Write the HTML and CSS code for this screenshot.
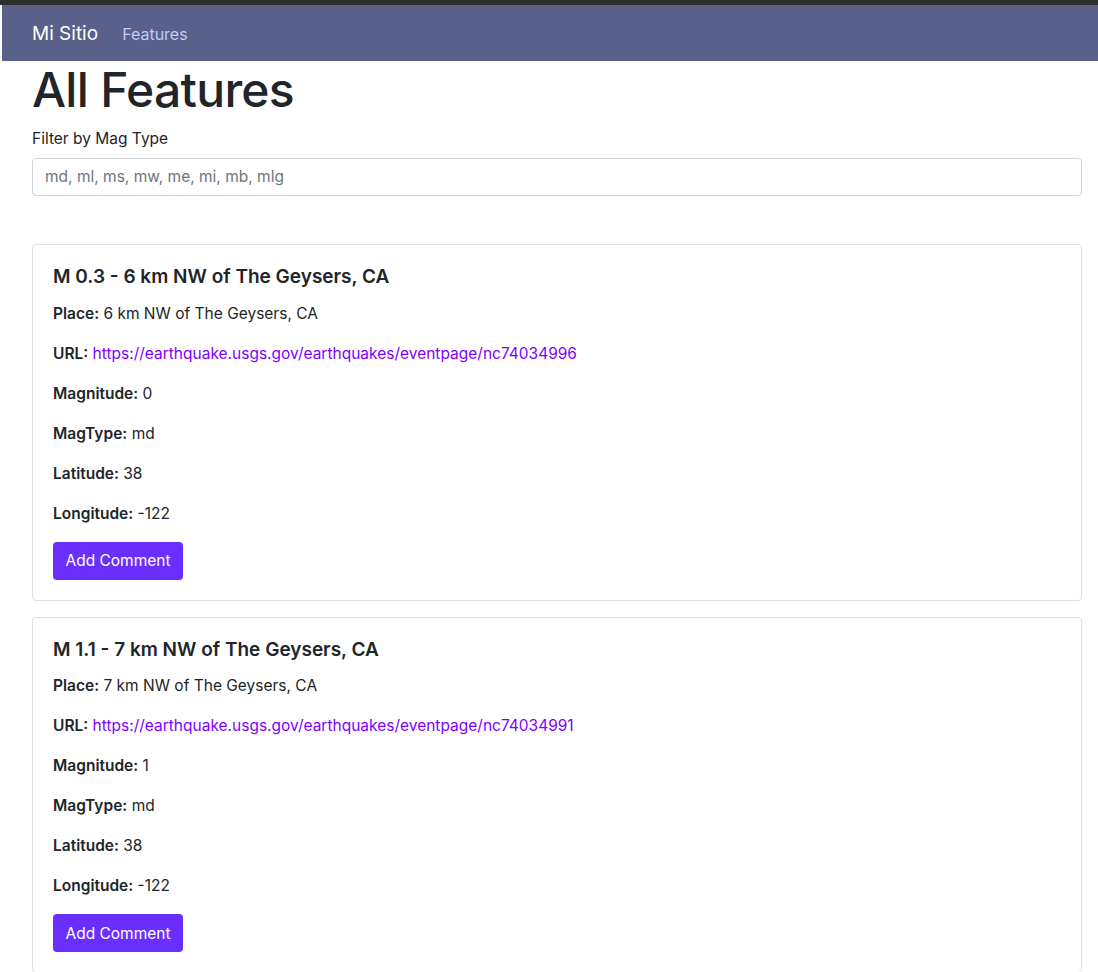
FILE: index.html
```html
<!DOCTYPE html>
<html lang="es">
<head>
<meta charset="utf-8">
<title>Mi Sitio</title>
<link rel="stylesheet" href="styles.css">
</head>
<body>
<div class="topstrip"></div>
<nav class="navbar">
  <a class="brand" href="#">Mi Sitio</a>
  <a class="nav-link" href="#">Features</a>
</nav>
<main class="container">
  <h1 class="title">All Features</h1>
  <label class="label" for="filter">Filter by Mag Type</label>
  <input id="filter" class="input" type="text" placeholder="md, ml, ms, mw, me, mi, mb, mlg">

  <section class="cards">
    <article class="card">
      <h5 class="card-title">M 0.3 - 6 km NW of The Geysers, CA</h5>
      <p class="row"><b>Place:</b> 6 km NW of The Geysers, CA</p>
      <p class="row"><b>URL:</b> <a class="link" href="#">https://earthquake.usgs.gov/earthquakes/eventpage/nc74034996</a></p>
      <p class="row"><b>Magnitude:</b> 0</p>
      <p class="row"><b>MagType:</b> md</p>
      <p class="row"><b>Latitude:</b> 38</p>
      <p class="row"><b>Longitude:</b> -122</p>
      <button class="btn">Add Comment</button>
    </article>
    <article class="card">
      <h5 class="card-title">M 1.1 - 7 km NW of The Geysers, CA</h5>
      <p class="row"><b>Place:</b> 7 km NW of The Geysers, CA</p>
      <p class="row"><b>URL:</b> <a class="link" href="#">https://earthquake.usgs.gov/earthquakes/eventpage/nc74034991</a></p>
      <p class="row"><b>Magnitude:</b> 1</p>
      <p class="row"><b>MagType:</b> md</p>
      <p class="row"><b>Latitude:</b> 38</p>
      <p class="row"><b>Longitude:</b> -122</p>
      <button class="btn">Add Comment</button>
    </article>
  </section>
</main>
</body>
</html>
```
FILE: styles.css
```css
* { box-sizing: border-box; }
html, body { margin: 0; padding: 0; }
body {
  font-family: Inter, "Noto Sans", sans-serif;
  font-size: 16px;
  line-height: 1.5;
  color: #212529;
  background: #fff;
}
.topstrip {
  height: 5px;
  background: #2f2f2f;
}
.navbar {
  margin-left: 2px;
  height: 56px;
  background: #596089;
  display: flex;
  align-items: center;
  padding-left: 30px;
  padding-top: 2px;
}
.brand {
  color: #fff;
  text-decoration: none;
  font-size: 19px;
  margin-right: 24px;
}
.nav-link {
  color: #bfcdf0;
  text-decoration: none;
  font-size: 16px;
}
.container {
  padding: 0 16px 0 32px;
}
.title {
  font-size: 48px;
  font-weight: 500;
  line-height: 1.2;
  margin: 0 0 8px;
  letter-spacing: -0.7px;
}
.label {
  display: block;
  font-size: 15.5px;
  margin-bottom: 8px;
}
.input {
  display: block;
  width: 100%;
  height: 38px;
  border: 1px solid #ced4da;
  border-radius: 4px;
  padding: 6px 12px;
  font-family: inherit;
  font-size: 15.5px;
  color: #212529;
}
.input::placeholder { color: #6c757d; }
.cards {
  margin-top: 48px;
  display: flex;
  flex-direction: column;
  gap: 16px;
}
.card {
  border: 1px solid #dfdfdf;
  border-radius: 4px;
  padding: 20px;
}
.card-title {
  font-size: 19px;
  font-weight: 600;
  line-height: 1.2;
  margin: 1px 0 13px;
}
.row {
  margin: 0 0 16px;
  font-size: 15.5px;
  line-height: 24px;
}
.row b { font-weight: 600; }
.link {
  color: #8000ff;
  text-decoration: none;
}
.btn {
  display: block;
  height: 38px;
  width: 130px;
  background: #6a2fff;
  color: #fff;
  border: none;
  border-radius: 4px;
  font-family: inherit;
  font-size: 15.5px;
  margin-top: 0;
}
```
